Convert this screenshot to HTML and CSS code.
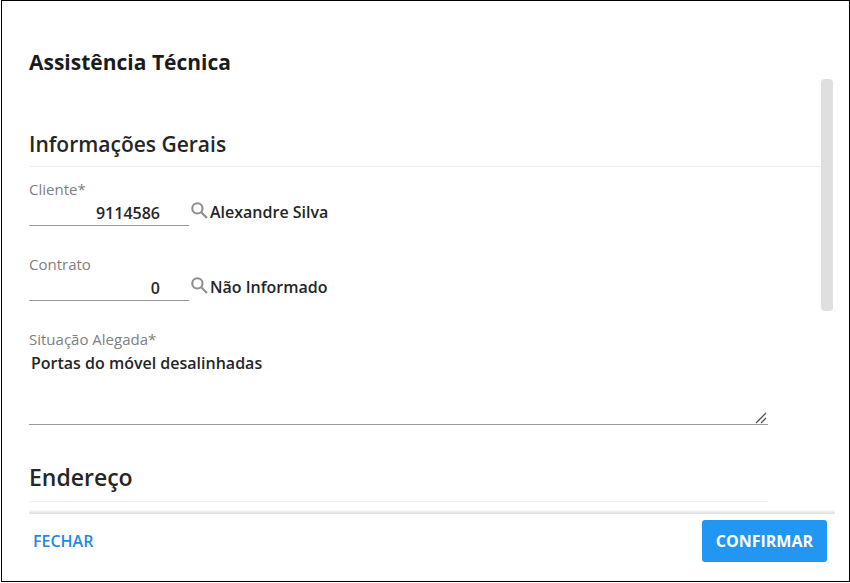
FILE: index.html
```
<!DOCTYPE html>
<html lang="pt-BR">
<head>
<meta charset="utf-8">
<title>Assistência Técnica</title>
<link rel="stylesheet" href="styles.css">
</head>
<body>
<form class="dialog">
  <h1 class="title">Assistência Técnica</h1>
  <div class="viewport">
    <div class="content">
      <section class="section">
        <h2 class="heading">Informações Gerais</h2>
        <div class="field">
          <label class="label" for="cliente">Cliente*</label>
          <div class="lookup">
            <input class="input" id="cliente" type="text" value="9114586">
            <button class="search" type="button" aria-label="Pesquisar cliente">
              <svg class="icon" viewBox="0 0 16 16"><circle cx="6" cy="6" r="4.8"/><path d="M9.6 9.6L15 15"/></svg>
            </button>
            <span class="result">Alexandre Silva</span>
          </div>
        </div>
        <div class="field">
          <label class="label" for="contrato">Contrato</label>
          <div class="lookup">
            <input class="input" id="contrato" type="text" value="0">
            <button class="search" type="button" aria-label="Pesquisar contrato">
              <svg class="icon" viewBox="0 0 16 16"><circle cx="6" cy="6" r="4.8"/><path d="M9.6 9.6L15 15"/></svg>
            </button>
            <span class="result">Não Informado</span>
          </div>
        </div>
        <div class="field memo">
          <label class="label" for="situacao">Situação Alegada*</label>
          <textarea class="textarea" id="situacao">Portas do móvel desalinhadas</textarea>
          <svg class="grip" viewBox="0 0 12 12"><path d="M1 11L11 1M6 11L11 6"/></svg>
        </div>
      </section>
      <section class="section address">
        <h2 class="heading large">Endereço</h2>
      </section>
    </div>
    <div class="scrollbar"><div class="thumb"></div></div>
  </div>
  <footer class="footer">
    <button class="button close" type="button">FECHAR</button>
    <button class="button confirm" type="submit">CONFIRMAR</button>
  </footer>
</form>
</body>
</html>
```
FILE: styles.css
```
* {
  box-sizing: border-box;
}

body {
  margin: 0;
  background: #fff;
  color: #262626;
  font-family: "Open Sans", "Noto Sans", sans-serif;
  font-size: 16px;
  font-weight: 600;
  line-height: 24px;
}

input,
textarea,
button {
  font: inherit;
  color: inherit;
  margin: 0;
  padding: 0;
  border: 0;
  background: none;
}

.dialog {
  display: flex;
  flex-direction: column;
  height: calc(100vh - 1px);
  margin-left: 1px;
  padding: 47px 14px 0 27px;
  border: 1px solid #000;
}

.title {
  margin: 0;
  font-size: 21px;
  font-weight: 700;
  line-height: 28px;
  color: #1b1b1b;
}

.viewport {
  display: flex;
  flex: 1;
  min-height: 0;
  margin-top: 3px;
  overflow: hidden;
}

.content {
  flex: 1;
}

.section {
  padding-top: 51px;
}

.heading {
  margin: 0 0 11px;
  padding-bottom: 8px;
  border-bottom: 1px solid #eee;
  font-size: 21px;
  font-weight: 600;
  line-height: 28px;
}

.large {
  padding-bottom: 10px;
  font-size: 23px;
}

.field {
  margin-bottom: 27px;
}

.label {
  display: block;
  font-size: 15px;
  font-weight: 400;
  line-height: 22px;
  color: #808080;
}

.lookup {
  display: flex;
  align-items: flex-start;
}

.input {
  width: 160px;
  height: 26px;
  padding-right: 29px;
  border-bottom: 1px solid #999;
  text-align: right;
}

.search {
  display: flex;
  padding: 2px;
  cursor: pointer;
}

.icon {
  width: 17px;
  height: 17px;
  fill: none;
  stroke: #8e8e8e;
  stroke-width: 2;
}

.result {
  line-height: 24px;
}

.memo {
  position: relative;
  margin: 0 53px 0 0;
}

.textarea {
  display: block;
  width: 100%;
  height: 75px;
  padding: 1px 2px 0;
  border-bottom: 1px solid #999;
  resize: none;
}

.grip {
  position: absolute;
  right: 1px;
  bottom: 1px;
  width: 12px;
  height: 12px;
  fill: none;
  stroke: #555;
  stroke-width: 1.3;
}

.address {
  margin-right: 53px;
  padding-top: 38px;
}

.scrollbar {
  width: 12px;
  margin-right: 2px;
}

.thumb {
  height: 232px;
  border-radius: 4px;
  background: #dfdfdf;
}

.footer {
  display: grid;
  grid-template-columns: auto auto;
  flex: none;
  justify-content: space-between;
  background: #fff;
}

.footer::before {
  content: "";
  display: block;
  grid-column: 1 / -1;
  height: 4px;
  background: linear-gradient(#fafafa, #e0e0e0);
}

.button {
  height: 42px;
  margin: 6px 0 19px;
  padding: 0 4px;
  font-weight: 600;
  cursor: pointer;
}

.close {
  color: #1e88e5;
}

.confirm {
  margin-right: 8px;
  padding: 0 14px;
  border-radius: 3px;
  background: #2196f3;
  color: #fff;
  font-weight: 700;
}
```
